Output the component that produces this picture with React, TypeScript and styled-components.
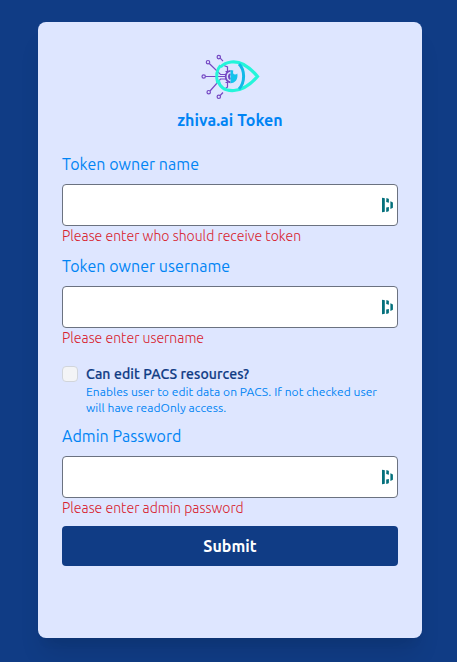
import React from "react";
import styled, { createGlobalStyle } from "styled-components";

const GlobalStyle = createGlobalStyle`
  *, *::before, *::after { box-sizing: border-box; }
  body { margin: 0; background: #103c85; font-family: Ubuntu, "Noto Sans", sans-serif; }
`;

const Page = styled.main`
  min-height: 662px;
  padding: 22px 35px 24px 38px;
  overflow: hidden;
  background: #103c85;
`;

const Card = styled.form`
  display: flex;
  flex-direction: column;
  height: 616px;
  padding: 30px 24px 24px;
  border-radius: 8px;
  background: #dee6ff;
  box-shadow: 0 20px 25px -5px rgba(0, 0, 0, 0.1), 0 10px 10px -5px rgba(0, 0, 0, 0.04);
`;

const Logo = styled.svg`
  display: block;
  width: 60px;
  height: 48px;
  margin: 0 auto;
`;

const Title = styled.h1`
  margin: 8px 0 20px;
  font-size: 16px;
  line-height: 24px;
  font-weight: 700;
  letter-spacing: 0.1px;
  text-align: center;
  color: #0084f4;
`;

const Field = styled.div`
  display: flex;
  flex-direction: column;
  margin-bottom: 8px;
`;

const Label = styled.label`
  align-self: flex-start;
  margin-bottom: 8px;
  font-size: 16px;
  line-height: 24px;
  letter-spacing: 0.04px;
  white-space: nowrap;
  color: #0084f4;
`;

const InputFrame = styled.div`
  display: flex;
  align-items: center;
  height: 42px;
  padding-right: 2px;
  border: 1px solid #6b7280;
  border-radius: 4px;
  background: #fff;
`;

const Input = styled.input`
  flex: 1;
  min-width: 0;
  height: 100%;
  padding: 8px 12px;
  border: 0;
  outline: 0;
  background: transparent;
  font: inherit;
`;

const ErrorText = styled.span`
  align-self: flex-start;
  font-size: 14px;
  line-height: 20px;
  font-weight: 300;
  letter-spacing: 0.01px;
  white-space: nowrap;
  color: #d8202c;
`;

const CheckRow = styled.div`
  display: flex;
  gap: 8px;
  margin: 8px 0;
`;

const Checkbox = styled.input`
  appearance: none;
  flex: none;
  width: 16px;
  height: 16px;
  margin: 2px 0 0;
  border: 1px solid #d1d5db;
  border-radius: 4px;
  background: #f3f4f6;
`;

const CheckLabel = styled.label`
  display: block;
  font-size: 14px;
  line-height: 20px;
  font-weight: 500;
  letter-spacing: 0.1px;
  color: #103c85;
  -webkit-text-stroke: 0.2px #103c85;
`;

const Help = styled.p`
  margin: 0;
  font-size: 12px;
  line-height: 16px;
  letter-spacing: 0.05px;
  white-space: nowrap;
  color: #0084f4;
`;

const Submit = styled.button`
  height: 40px;
  padding: 0;
  border: 0;
  border-radius: 4px;
  background: #103c85;
  color: #fff;
  font: 700 16px/24px Ubuntu, "Noto Sans", sans-serif;
  letter-spacing: 0.05px;
`;

const ManagerIcon = () => (
  <svg width="14" height="16" viewBox="0 0 14 16" fill="#04707c" aria-hidden="true">
    <path d="M1.4.7 3.8 1.3v13.4l-2.4.6a.4.4 0 0 1-.4-.4V1.1a.4.4 0 0 1 .4-.4Z" />
    <path d="M5.4 1 7.6 1.8q.3.2.3.6v3.3L5.2 5Z" />
    <path d="M5.2 10.6 7.9 10v3.6q0 .4-.3.6L5.6 15q-.4 0-.4-.4Z" />
    <path d="m9.4 4.3 2.1 1q.4.2.4.6v4.5q0 .4-.4.6L9.4 12Z" />
  </svg>
);

const EyeLogo = () => (
  <Logo viewBox="0 0 60 48" fill="none" aria-hidden="true">
    <g stroke="#7548c4" strokeWidth="1.2">
      <circle cx="18.8" cy="5.1" r="1.7" />
      <circle cx="8" cy="10.2" r="1.7" />
      <circle cx="3.7" cy="24.5" r="1.7" />
      <circle cx="8.7" cy="40.2" r="1.7" />
      <circle cx="18.8" cy="44.8" r="1.7" />
      <path d="M20.2 6.2 23 9.2M24 13.5 27.5 15v4.5h-2M9.3 11.5 20.5 22.5H26M5.5 24.5H25M10 39 20.5 27H26M20.2 43.5 23 40.5M25 37l2.5-2v-4.5h-2" />
    </g>
    <path d="M20.5 15C26 9.3 36 8.2 43.5 12.5 49 15.5 53 19 57.5 24.5 51 32 43 38 34 38.5 25 39 19.5 35 18 28" stroke="#24f5da" strokeWidth="3.2" />
    <path d="M20.5 13.5C16.5 18 15.5 23 17.7 31" stroke="#24f5da" strokeWidth="3" />
    <path d="M39 12C45 18 45.3 30 39 37" stroke="#12b9e8" strokeWidth="3" />
    <path d="M30.5 18.8a5.9 5.9 0 0 0 0 11.6" stroke="#7548c4" strokeWidth="1.8" />
    <path d="M30.5 22.2a2.6 2.6 0 0 0 0 4.8" stroke="#7548c4" strokeWidth="2" />
    <path d="M30.5 18q2 0 2.8.4-1 4 1.8 4.2 1.5 0 2.2-1.1c1 5.5-2 9.7-6.8 9.7Z" fill="#14c2ec" />
  </Logo>
);

interface TextFieldProps {
  id: string;
  label: string;
  error: string;
  type?: string;
}

const TextField = ({ id, label, error, type = "text" }: TextFieldProps) => (
  <Field>
    <Label htmlFor={id}>{label}</Label>
    <InputFrame>
      <Input id={id} type={type} />
      <ManagerIcon />
    </InputFrame>
    <ErrorText>{error}</ErrorText>
  </Field>
);

export default function App() {
  return (
    <>
      <GlobalStyle />
      <Page>
        <Card onSubmit={(e: React.FormEvent) => e.preventDefault()}>
          <EyeLogo />
          <Title>zhiva.ai Token</Title>
          <TextField id="owner" label="Token owner name" error="Please enter who should receive token" />
          <TextField id="username" label="Token owner username" error="Please enter username" />
          <CheckRow>
            <Checkbox type="checkbox" id="edit" />
            <div>
              <CheckLabel htmlFor="edit">Can edit PACS resources?</CheckLabel>
              <Help>
                Enables user to edit data on PACS. If not checked user
                <br />
                will have readOnly access.
              </Help>
            </div>
          </CheckRow>
          <TextField id="password" type="password" label="Admin Password" error="Please enter admin password" />
          <Submit type="submit">Submit</Submit>
        </Card>
      </Page>
    </>
  );
}
